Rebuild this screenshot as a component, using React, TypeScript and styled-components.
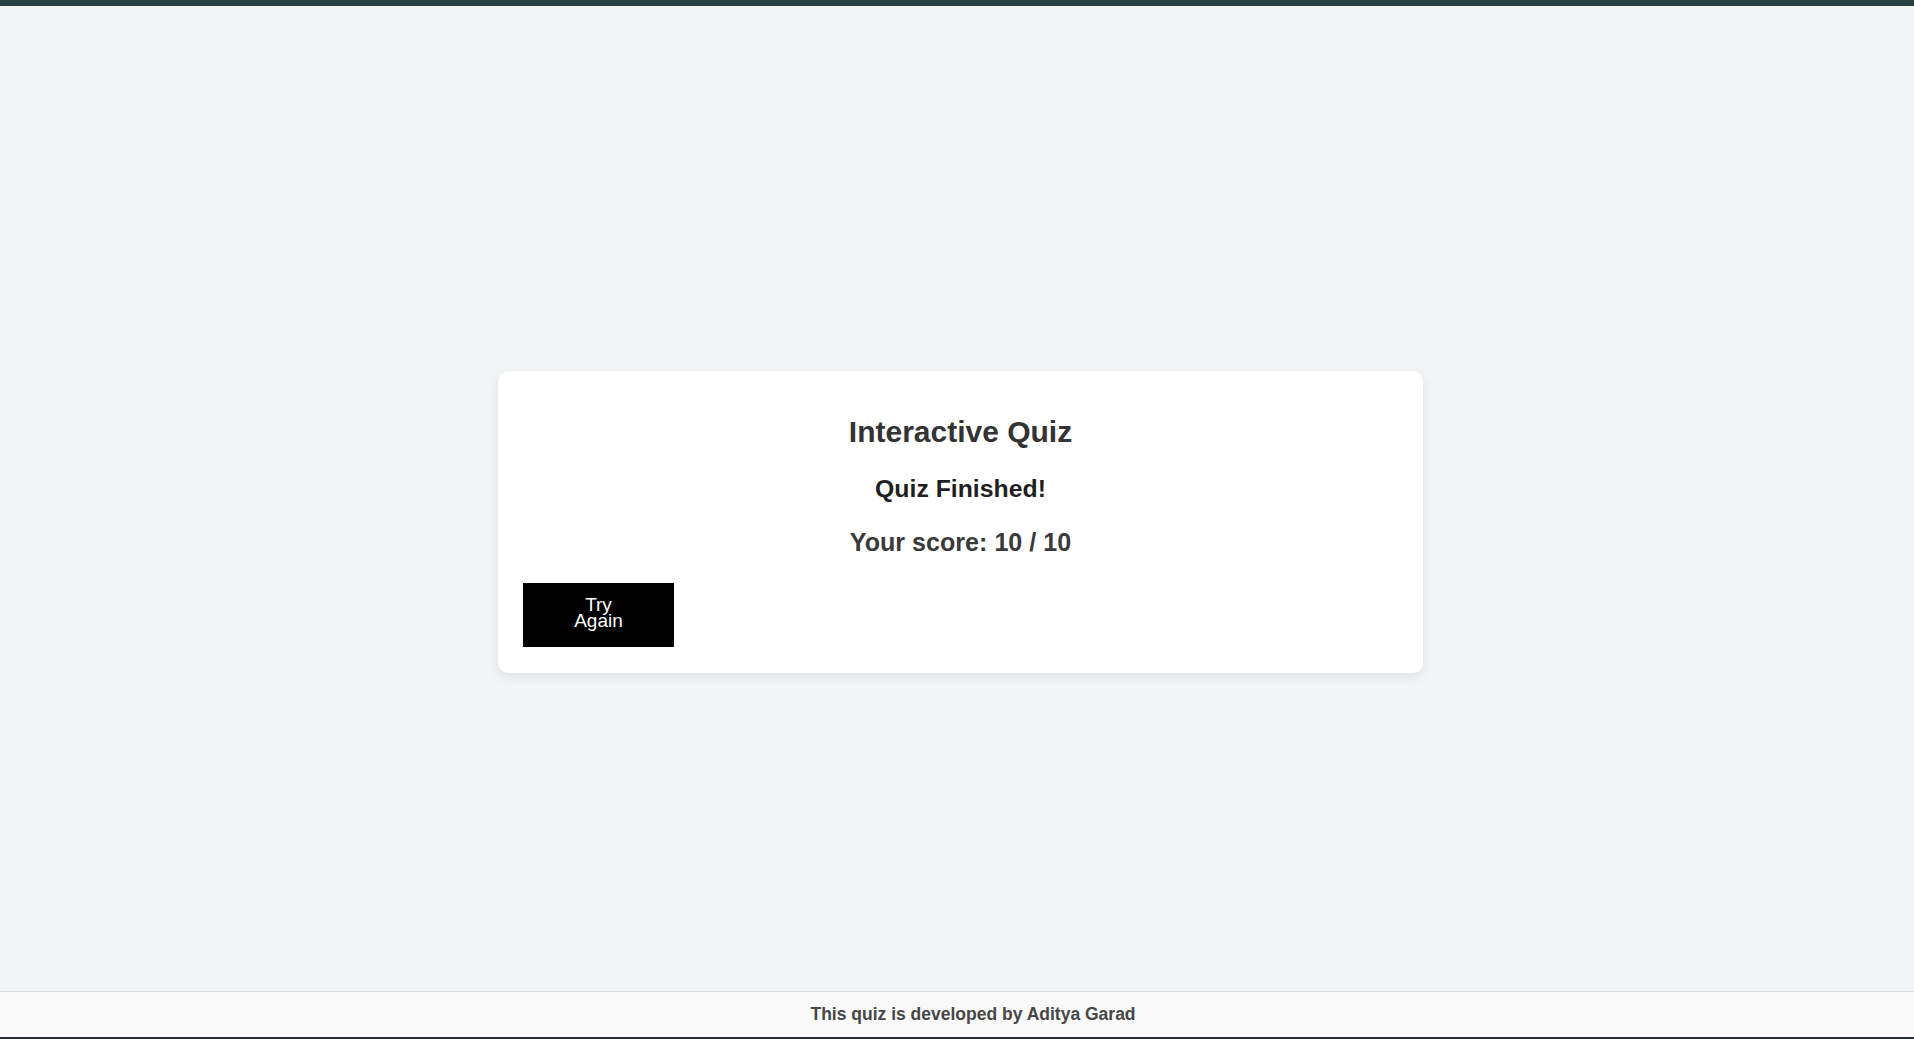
import styled, { createGlobalStyle } from "styled-components";

const GlobalStyle = createGlobalStyle`
  html, body {
    margin: 0;
    padding: 0;
    background-color: #f3f4f6;
    font-family: "Liberation Sans", Arial, sans-serif;
  }
  * {
    box-sizing: border-box;
  }
`;

const Page = styled.div`
  height: 100vh;
  display: flex;
  flex-direction: column;
  overflow: hidden;
`;

const TopBar = styled.div`
  height: 6px;
  flex-shrink: 0;
  background-color: #283f45;
`;

const Main = styled.main`
  flex: 1;
  display: flex;
  justify-content: center;
  align-items: center;
  padding: 47px 0 0 7px;
`;

const Card = styled.section`
  width: 925px;
  background-color: #ffffff;
  border-radius: 10px;
  box-shadow: 0 4px 12px rgba(0, 0, 0, 0.08);
  padding: 44px 25px 26px;
  display: flex;
  flex-direction: column;
`;

const Title = styled.h1`
  margin: 0 0 26px;
  font-size: 30px;
  line-height: 34px;
  font-weight: 700;
  color: #333333;
  text-align: center;
`;

const Heading = styled.h2<{ $muted?: boolean }>`
  margin: 0 0 ${(p) => (p.$muted ? "26px" : "25px")};
  font-size: ${(p) => (p.$muted ? "25.1px" : "24.8px")};
  line-height: ${(p) => (p.$muted ? "29px" : "28px")};
  font-weight: 700;
  color: ${(p) => (p.$muted ? "#3a3a3a" : "#1f1f1f")};
  text-align: center;
`;

const Button = styled.button`
  align-self: flex-start;
  width: 151px;
  background-color: #000000;
  color: #ffffff;
  border: none;
  border-radius: 0;
  padding: 14px 50px 18px;
  font-family: "Liberation Sans", Arial, sans-serif;
  font-size: 19px;
  line-height: 16px;
  cursor: pointer;
`;

const Footer = styled.footer`
  flex-shrink: 0;
  background-color: #f9f9f9;
  border-top: 1px solid #dddddd;
  border-bottom: 2px solid #2b2d38;
  padding: 12px 0 12px 32px;
  text-align: center;
  font-size: 17.5px;
  line-height: 21px;
  font-weight: 700;
  color: #474747;
`;

function App() {
  return (
    <>
      <GlobalStyle />
      <Page>
        <TopBar />
        <Main>
          <Card>
            <Title>Interactive Quiz</Title>
            <Heading>Quiz Finished!</Heading>
            <Heading $muted>Your score: 10 / 10</Heading>
            <Button>Try Again</Button>
          </Card>
        </Main>
        <Footer>This quiz is developed by Aditya Garad</Footer>
      </Page>
    </>
  );
}

export default App;
